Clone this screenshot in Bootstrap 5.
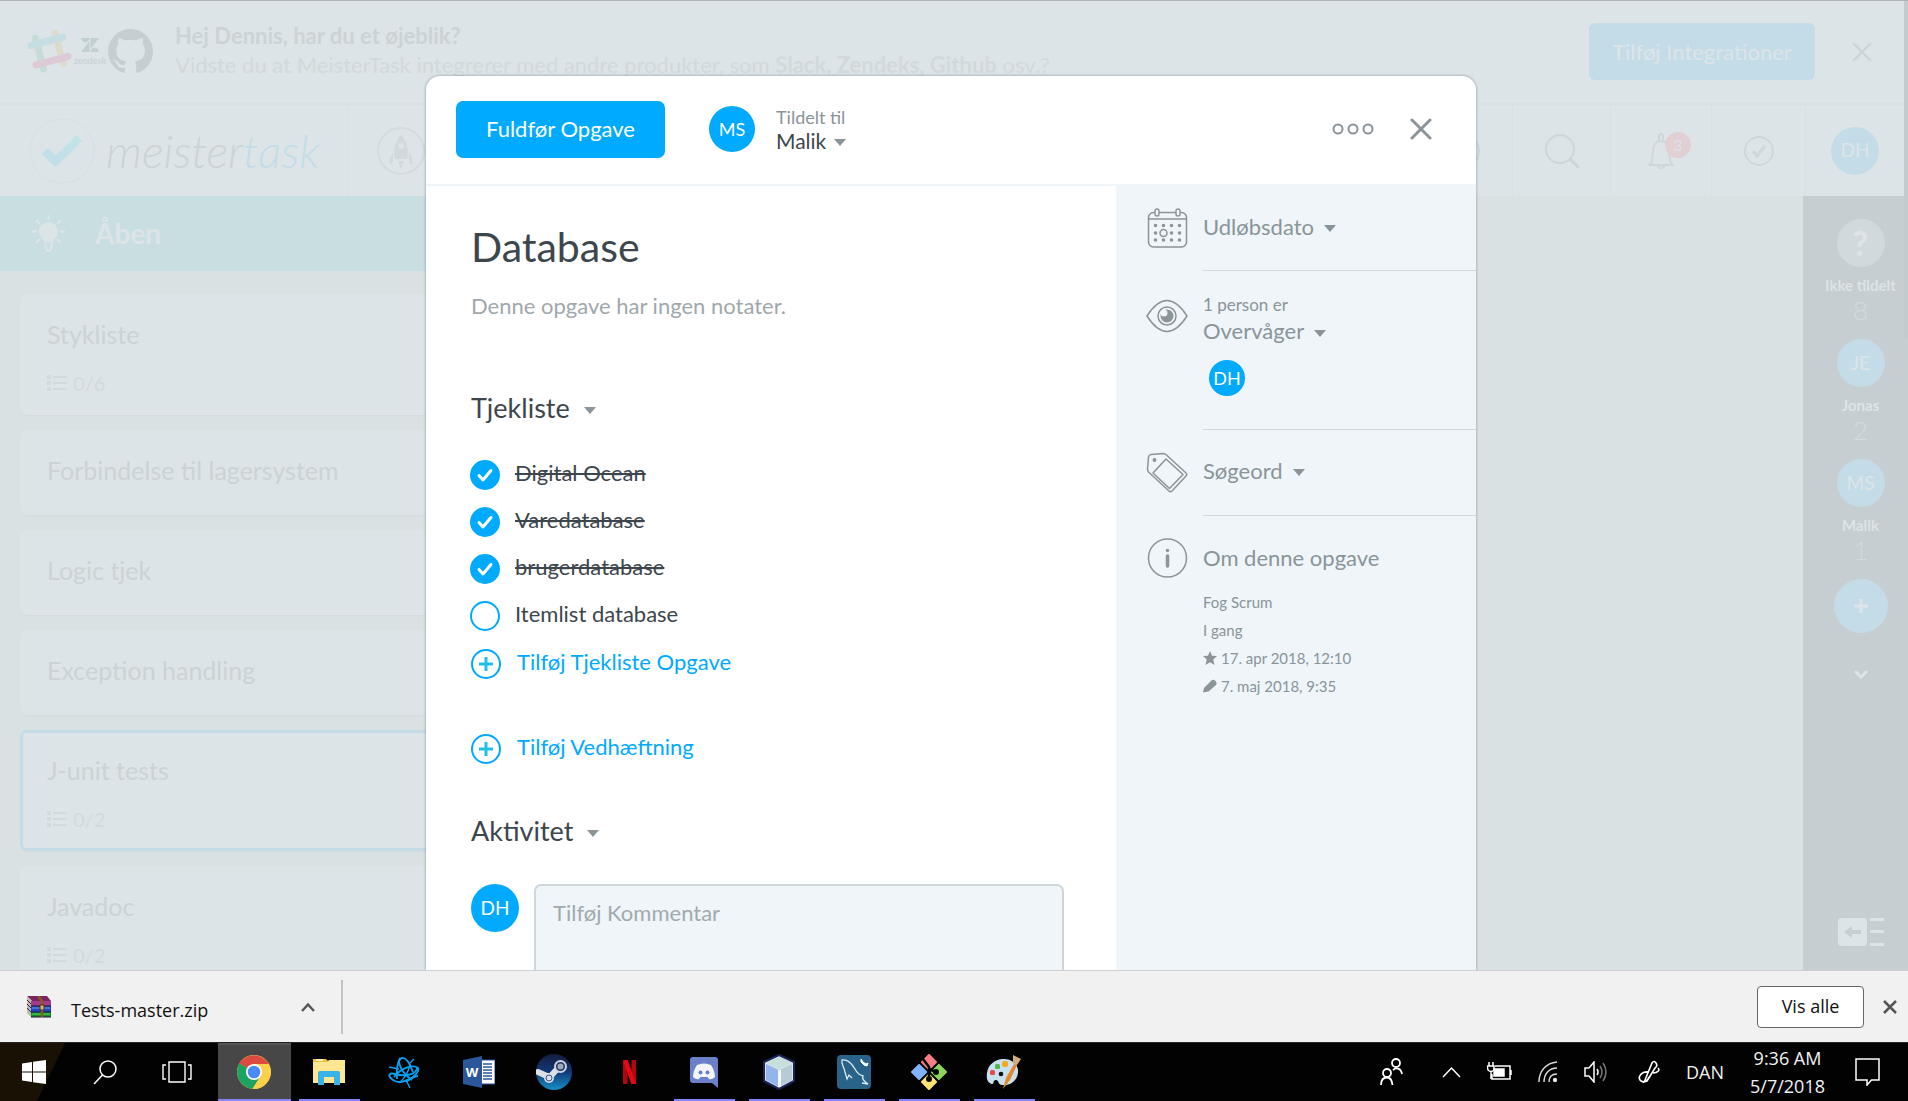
<!DOCTYPE html>
<html lang="da">
<head>
<meta charset="utf-8">
<meta name="viewport" content="width=device-width, initial-scale=1">
<title>MeisterTask – Database</title>
<link href="https://cdn.jsdelivr.net/npm/bootstrap@5.3.0/dist/css/bootstrap.min.css" rel="stylesheet">
<style>
:root{--azure:#00aaff;--ink:#3d464d;--mute:#8a9499;--pale:#eff5f8;--fog:#dde4e7;--fog-line:#d9e0e3;--fog-text:#cbd3d6;--fog-blue:#c4dce8;--fog-side:#c6ced1}
body{font-family:Lato,"Open Sans",sans-serif;font-size:22px;line-height:28px;color:var(--ink);background:#d9e1e3}
svg{display:block;flex:none}
button{font:inherit;color:inherit;background:none;border:0;padding:0}
.dot{display:flex;align-items:center;justify-content:center;flex:none;border-radius:50%;background:var(--azure);color:#fff;width:48px;height:48px;font-size:19px;padding-bottom:1px}
.dot-46{width:46px;height:46px;font-size:18px}
.dot-36{width:36px;height:36px;font-size:18px}
.tri{display:inline-block;margin-top:4px;border:6px solid transparent;border-top:7px solid var(--mute);border-bottom:0;flex:none}

/* washed-out board behind the dialog */
.stage{min-height:0;border-top:1px solid #aeb2b8}
.board{color:var(--fog-text)}
.board .dot{background:var(--fog-blue);color:var(--fog)}
.promo{height:104px;padding:0 36px 0 27px;border-bottom:2px solid #d9e0e3;background:var(--fog)}
.promo-logos{margin-top:28px}
.promo-copy{padding:20px 0 0 22px;line-height:29px}
.promo-line{color:#d1d9dc}
.promo-btn{width:226px;height:57px;margin-top:22px;border-radius:6px;background:var(--fog-blue);color:var(--fog)}
.promo-close{margin:41px 0 0 37px}
.zen{width:36px;font-size:9px;line-height:10px;font-weight:700}
.masthead{height:91px;background:var(--fog)}
.brand{width:349px;padding-left:29px;border-right:1px solid var(--fog-line)}
.wordmark{padding-left:11px;font-size:46px;line-height:60px;font-weight:300;font-style:italic}
.wordmark span{color:var(--fog-blue)}
.cell{width:98px;border-right:1px solid var(--fog-line);display:flex;align-items:center;justify-content:center}
.cell.wide{width:101px}
.cell.slim{width:94px}
.bell-count{position:absolute;left:18px;top:0;width:26px;height:26px;border-radius:50%;background:#e0cfd3;color:var(--fog);font-size:16px;line-height:26px;text-align:center}
.column-top{height:75px;background:#c8dee1;padding-left:32px;color:var(--fog);font-size:28px;font-weight:700;gap:30px}
.lane{width:480px}
.lane-body{padding:23px 0 0 20px;gap:15px}
.task{background:var(--fog);border:3px solid var(--fog);border-radius:7px;padding:20px 24px 24px;box-shadow:0 1px 1px #d4dbde;font-size:25px;line-height:35px}
.task.picked{border-color:var(--fog-blue)}
.task-meta{font-size:20px;line-height:24px;color:#d2dadd;margin:19px 0 -7px;gap:6px}
.people{width:105px;background:var(--fog-side);padding:23px 0 24px 10px;color:var(--fog)}
.people-name{font-size:15px;line-height:20px;font-weight:700;margin-top:8px;white-space:nowrap}
.people-count{font-size:26px;line-height:30px;font-weight:300;margin-bottom:14px;color:#d3dbde}
.board .dot.unset{background:#d1d9dc;font-size:34px;font-weight:900}
.board .dot.plus{width:54px;height:54px;margin-bottom:31px}
.thumb{position:absolute;right:0;top:0;width:4px;height:338px;background:#c3cbce;border-radius:0 0 0 4px}

/* task dialog */
.veil{position:absolute;inset:75px 6px 0 0}
.dialog{width:1050px;background:#fff;border-radius:14px 14px 0 0;box-shadow:0 0 3px rgba(70,85,95,.6);overflow:hidden}
.dialog-top{height:110px;border-bottom:2px solid var(--pale);padding:0 44px 2px 30px}
.done-btn{width:209px;height:57px;border-radius:7px;background:var(--azure);color:#fff;margin-right:44px}
.assign{margin-left:21px;line-height:23px;text-align:left}
.assign small{display:block;font-size:18px;color:var(--mute)}
.assign span{font-size:21px}
.close-btn{margin-left:36px}
.notes{padding:37px 52px 0 45px}
.notes h1{font-size:41px;line-height:48px;font-weight:400;margin:0 0 21px}
.hint{color:#9fa8ac;margin:0 0 71px}
.section-h{font-size:27px;line-height:34px;font-weight:400;margin:0;gap:14px}
.checks{margin:26px 0 1px -1px}
.check-row{height:47px;min-height:0;margin:0;padding:0;gap:15px}
.check-row label{padding-bottom:3px}
.check-row .form-check-input{width:30px;height:30px;margin:0;border:2px solid var(--azure);border-radius:50%;float:none;flex:none}
.check-row .form-check-input:checked{background-color:var(--azure);background-size:30px 30px;background-position:center;background-image:url("data:image/svg+xml,%3csvg xmlns='http://www.w3.org/2000/svg' viewBox='0 0 30 30'%3e%3cpath d='M9 15.500l4 4.500 8-9.500' fill='none' stroke='%23fff' stroke-width='3' stroke-linecap='round' stroke-linejoin='round'/%3e%3c/svg%3e")}
.check-row .form-check-input:checked+label{text-decoration:line-through;text-decoration-thickness:2px}
.add{height:47px;color:var(--azure);text-decoration:none;gap:16px}
.add span{padding-bottom:3px}
.attach{margin:38px 0 42px}
.talk{margin-top:36px;gap:15px}
.comment{border:2px solid #cfd6da;border-radius:7px;background:var(--pale);height:150px;padding:13px 17px;resize:none;font-size:22px;line-height:28px}
.comment::placeholder{color:#a1aaae}
.facts{width:360px;background:var(--pale);color:var(--mute)}
.fact-icon{width:87px;padding:22px 0 0 30px;flex:none}
.fact{min-height:86px}
.fact:first-child{min-height:85px}
.fact>div:last-child{border-bottom:1px solid #d2d9dc}
.fact button{height:84px;gap:10px;padding-bottom:3px}
.fact .tall{height:26px;padding:0}
.watch{padding:21px 0 33px}
.watch-note{font-size:17px;line-height:26px}
.watch .dot{margin:16px 0 0 6px}
.about-h{padding:28px 0 16px}
.about{font-size:15px;line-height:28px;gap:4px}

/* browser download shelf */
.shelf{height:72px;background:#f1f1f1;border-top:1px solid #cdcfd1;color:#111;font-family:"Open Sans","Noto Sans",sans-serif;font-size:18px;padding:0 11px 0 27px}
.saved{width:316px;height:54px;border-right:2px solid #c3c3c3;padding-right:26px;gap:20px}
.saved span{padding-top:6px}
.all-btn{width:107px;height:42px;background:#fff;border:1px solid #666;border-radius:4px;padding-bottom:2px;margin-right:19px}

/* operating system bar */
.taskbar{height:59px;background:#020202;border-top:1px solid #242424;color:#f2f2f2;font-family:"Open Sans","Noto Sans",sans-serif;font-size:18px;line-height:28px}
.sys{width:72px;display:flex;align-items:center;justify-content:center}
.sys:first-child{width:67px;margin-right:2px}
.app{width:73px;margin-right:2px;display:flex;align-items:center;justify-content:center;border-top:2px solid transparent;border-bottom:2px solid transparent}
.app.front{background:#474747;border-top-color:#565656}
.app.open{width:61px;margin:0 8px 0 6px}
.app.front,.app.open{border-bottom-color:#8583f5}
.app svg{margin-right:1px}
.corner{background:linear-gradient(116deg,#191103 0 58px,transparent 59px);margin-right:5px}
.tray{gap:26px;padding-right:28px}
.tray svg:nth-of-type(2){margin-left:13px}
</style>
</head>
<body class="d-flex flex-column vh-100 overflow-hidden">
<div class="stage flex-grow-1 position-relative overflow-hidden">
  <div class="board d-flex flex-column h-100">
    <aside class="promo d-flex align-items-start flex-shrink-0">
      <div class="promo-logos d-flex align-items-center">
        <svg width="45" height="45" viewBox="0 0 45 45" fill="none" stroke-width="7" stroke-linecap="round"><path d="M8.500 9l8 31" stroke="#c6dcd8"/><path d="M28 4l8.500 31" stroke="#dddbcd"/><path d="M4 16.500L36 8" stroke="#c6dde3"/><path d="M9 36l32-8.500" stroke="#dccbd7"/></svg>
        <div class="zen text-center"><svg class="mx-auto mb-1" width="18" height="14" viewBox="0 0 18 14" fill="#c3d0d3"><path d="M0 0h8.500a4.200 4.200 0 0 1-8.500 0zM18 0L9.500 11V0zM8.500 14H0L8.500 3zM9.500 14a4.200 4.200 0 0 1 8.500 0z"/></svg>zendesk</div>
        <svg width="45" height="45" viewBox="0 0 16 16" fill="#c6ced1"><path d="M8 0C3.580 0 0 3.580 0 8c0 3.540 2.290 6.530 5.470 7.590.4.070.55-.17.55-.38 0-.19-.01-.82-.01-1.490-2.010.37-2.530-.49-2.690-.94-.09-.23-.48-.94-.82-1.130-.28-.15-.68-.52-.01-.53.63-.01 1.080.58 1.230.82.72 1.210 1.870.87 2.330.66.07-.52.28-.87.51-1.070-1.780-.2-3.640-.89-3.640-3.950 0-.87.31-1.590.82-2.150-.08-.2-.36-1.020.08-2.120 0 0 .67-.21 2.200.82.640-.18 1.320-.27 2-.27.680 0 1.360.09 2 .27 1.530-1.040 2.200-.82 2.200-.82.44 1.100.16 1.920.08 2.120.51.560.82 1.270.82 2.150 0 3.070-1.870 3.750-3.650 3.950.29.250.54.730.54 1.480 0 1.070-.01 1.930-.01 2.200 0 .21.150.46.550.38A8.013 8.013 0 0 0 16 8c0-4.420-3.580-8-8-8z"/></svg>
      </div>
      <div class="promo-copy flex-grow-1"><strong>Hej Dennis, har du et øjeblik?</strong><div class="promo-line">Vidste du at MeisterTask integrerer med andre produkter, som <b>Slack, Zendeks, Github</b> osv.?</div></div>
      <button class="promo-btn">Tilføj Integrationer</button>
      <button class="promo-close" aria-label="Luk"><svg width="20" height="20" viewBox="0 0 20 20" stroke="#cbd3d6" stroke-width="2"><path d="M1 1l18 18M19 1L1 19"/></svg></button>
    </aside>
    <header class="masthead d-flex flex-shrink-0">
      <a href="#" class="brand d-flex align-items-center text-decoration-none text-reset">
        <svg width="66" height="66" viewBox="0 0 66 66"><defs><linearGradient id="tick" x1="0" y1="1" x2="1" y2="0"><stop stop-color="#c1dceb"/><stop offset="1" stop-color="#c1e5e5"/></linearGradient></defs><circle cx="33" cy="33" r="32" fill="none" stroke="#d8dfe2"/><path d="M12.500 36l6.500-6.500 7.500 8L47.500 17l6 6-27 26z" fill="url(#tick)"/></svg>
        <span class="wordmark">meister<span>task</span></span>
      </a>
      <div class="d-flex align-items-center ms-4 ps-1"><svg width="48" height="48" viewBox="0 0 48 48"><circle cx="24" cy="24" r="23" fill="none" stroke="#d3dbde" stroke-width="2"/><g fill="#d1d9dc"><path fill-rule="evenodd" d="M24 8c6 6 8 14 6 24H18c-2-10 0-18 6-24zm0 8a3 3 0 1 0 0 6 3 3 0 0 0 0-6z"/><path d="M16 26v9l-3 3c-1-5 0-9 3-12zM32 26v9l3 3c1-5 0-9-3-12zM21 34h6l-3 8z"/></g></svg></div>
      <nav class="d-flex ms-auto me-1">
        <a href="#" class="cell" aria-label="Tid"><svg width="34" height="34" viewBox="0 0 34 34" fill="none" stroke="#cfd7da" stroke-width="2"><circle cx="17" cy="17" r="15"/></svg></a>
        <a href="#" class="cell" aria-label="Søg"><svg width="36" height="36" viewBox="0 0 36 36" fill="none" stroke="#cdd5d8" stroke-width="2"><circle cx="16" cy="16" r="14"/><path d="M26 26l8 8" stroke-width="3" stroke-linecap="round"/></svg></a>
        <a href="#" class="cell wide text-decoration-none" aria-label="Beskeder"><span class="position-relative"><svg width="28" height="37" viewBox="0 0 28 37" fill="none" stroke="#cfd7da" stroke-width="2"><path d="M12 9V4a2 2 0 0 1 4 0v5M2 33c4-3 3-6 4-14 0-6 3-10 8-10s8 4 8 10c1 8 0 11 4 14z" stroke-linejoin="round"/><path d="M11 33a3 3 0 0 0 6 0"/></svg><span class="bell-count">3</span></span></a>
        <a href="#" class="cell slim" aria-label="Mine opgaver"><svg width="30" height="30" viewBox="0 0 30 30" fill="none" stroke="#cfd7da" stroke-width="2"><circle cx="15" cy="15" r="14"/><path d="M9 15l4 5 8-10" stroke-width="3"/></svg></a>
        <a href="#" class="cell text-decoration-none border-0"><span class="dot">DH</span></a>
      </nav>
    </header>
    <div class="d-flex flex-grow-1 overflow-hidden">
      <section class="lane overflow-hidden">
        <h2 class="column-top d-flex align-items-center m-0"><svg width="33" height="38" viewBox="0 0 33 38"><path d="M16.500 7a9.500 9.500 0 0 1 9.500 9.500c0 5-4 6-5 11h-9c-1-5-5-6-5-11A9.500 9.500 0 0 1 16.500 7z" fill="#dde4e7"/><path d="M16.500 0v5M0 16.500h5M28 16.500h5M4 5l4 4M29 5l-4 4M4 28l4-4M29 28l-4-4M13.500 28v4a3 3 0 0 0 6 0v-4" stroke="#dde4e7" stroke-width="2" fill="none"/><path d="M14 34h5v3h-5z" fill="#dde4e7"/></svg>Åben</h2>
        <div class="lane-body d-flex flex-column">
          <article class="task">Stykliste<div class="task-meta d-flex align-items-center"><svg width="20" height="16" viewBox="0 0 20 16" stroke="#d2dadd" stroke-width="2"><path d="M0 2h4M0 8h4M0 14h4" stroke-width="4"/><path d="M6 2h14M6 8h14M6 14h14"/></svg>0/6</div></article>
          <article class="task">Forbindelse til lagersystem</article>
          <article class="task">Logic tjek</article>
          <article class="task">Exception handling</article>
          <article class="task picked">J-unit tests<div class="task-meta d-flex align-items-center"><svg width="20" height="16" viewBox="0 0 20 16" stroke="#d2dadd" stroke-width="2"><path d="M0 2h4M0 8h4M0 14h4" stroke-width="4"/><path d="M6 2h14M6 8h14M6 14h14"/></svg>0/2</div></article>
          <article class="task">Javadoc<div class="task-meta d-flex align-items-center"><svg width="20" height="16" viewBox="0 0 20 16" stroke="#d2dadd" stroke-width="2"><path d="M0 2h4M0 8h4M0 14h4" stroke-width="4"/><path d="M6 2h14M6 8h14M6 14h14"/></svg>0/2</div></article>
        </div>
      </section>
      <aside class="people d-flex flex-column align-items-center ms-auto">
        <span class="dot unset">?</span><span class="people-name">Ikke tildelt</span><span class="people-count">8</span>
        <span class="dot">JE</span><span class="people-name">Jonas</span><span class="people-count">2</span>
        <span class="dot">MS</span><span class="people-name">Malik</span><span class="people-count">1</span>
        <button class="dot plus" aria-label="Tilføj medlem"><svg width="16" height="16" viewBox="0 0 16 16" stroke="#dde4e7" stroke-width="3"><path d="M8 1v14M1 8h14"/></svg></button>
        <svg width="30" height="20" viewBox="0 0 30 20" fill="none" stroke="#dde4e7" stroke-width="3" stroke-linecap="round"><path d="M10 8l5 5 5-5"/></svg>
        <button class="mt-auto" aria-label="Skjul panel"><svg width="46" height="28" viewBox="0 0 46 28" fill="#dde4e7"><rect width="29" height="28" rx="3"/><path d="M32 0h14v3H32zM32 12h14v3H32zM32 25h14v3H32z"/><path d="M6 14l8-6v4h9v4h-9v4z" fill="#c6ced1"/></svg></button>
      </aside>
    </div>
  </div>
  <div class="thumb"></div>

  <div class="veil d-flex justify-content-center">
    <main class="dialog d-flex flex-column" role="dialog" aria-label="Database">
      <div class="dialog-top d-flex align-items-center flex-shrink-0">
        <button class="done-btn">Fuldfør Opgave</button>
        <span class="dot dot-46">MS</span>
        <button class="assign"><small>Tildelt til</small><span class="d-flex align-items-center gap-2">Malik<i class="tri"></i></span></button>
        <button class="ms-auto" aria-label="Mere"><svg width="42" height="12" viewBox="0 0 42 12" fill="none" stroke="#8a9499" stroke-width="2"><circle cx="6" cy="6" r="4.500"/><circle cx="21" cy="6" r="4.500"/><circle cx="36" cy="6" r="4.500"/></svg></button>
        <button class="close-btn" aria-label="Luk opgave"><svg width="22" height="22" viewBox="0 0 22 22" stroke="#8a9499" stroke-width="3" stroke-linecap="round"><path d="M2 2l18 18M20 2L2 20"/></svg></button>
      </div>
      <div class="d-flex flex-grow-1">
        <section class="notes flex-grow-1">
          <h1>Database</h1>
          <p class="hint">Denne opgave har ingen notater.</p>
          <h2 class="section-h d-flex align-items-center">Tjekliste <i class="tri"></i></h2>
          <div class="checks">
            <div class="form-check check-row d-flex align-items-center"><input class="form-check-input" type="checkbox" id="c1" checked><label for="c1">Digital Ocean</label></div>
            <div class="form-check check-row d-flex align-items-center"><input class="form-check-input" type="checkbox" id="c2" checked><label for="c2">Varedatabase</label></div>
            <div class="form-check check-row d-flex align-items-center"><input class="form-check-input" type="checkbox" id="c3" checked><label for="c3">brugerdatabase</label></div>
            <div class="form-check check-row d-flex align-items-center"><input class="form-check-input" type="checkbox" id="c4"><label for="c4">Itemlist database</label></div>
          </div>
          <a href="#" class="add d-flex align-items-center"><svg width="30" height="30" viewBox="0 0 30 30" fill="none" stroke="#00aaff" stroke-width="2"><circle cx="15" cy="15" r="14"/><path d="M15 8v14M8 15h14" stroke="#1fbfe6" stroke-width="3"/></svg><span>Tilføj Tjekliste Opgave</span></a>
          <a href="#" class="add attach d-flex align-items-center"><svg width="30" height="30" viewBox="0 0 30 30" fill="none" stroke="#00aaff" stroke-width="2"><circle cx="15" cy="15" r="14"/><path d="M15 8v14M8 15h14" stroke="#1fbfe6" stroke-width="3"/></svg><span>Tilføj Vedhæftning</span></a>
          <h2 class="section-h d-flex align-items-center">Aktivitet <i class="tri"></i></h2>
          <div class="talk d-flex"><span class="dot">DH</span><textarea class="comment form-control" placeholder="Tilføj Kommentar" aria-label="Tilføj Kommentar"></textarea></div>
        </section>
        <aside class="facts flex-shrink-0">
          <div class="fact d-flex">
            <div class="fact-icon"><svg width="42" height="40" viewBox="0 0 42 40" fill="none" stroke="#8a9499"><rect x="2.500" y="4.500" width="38" height="34.500" rx="5" stroke-width="1.500"/><path d="M2.500 11h38" stroke-width="1.500"/><g fill="#eff5f8" stroke-width="1.400"><rect x="9" y="1" width="4" height="7" rx="2"/><rect x="30" y="1" width="4" height="7" rx="2"/></g><path d="M9.500 17.500h0M17.500 17.500h0M25.500 17.500h0M33.500 17.500h0M9.500 25h0M25.500 25h0M33.500 25h0M9.500 32h0M17.500 32h0M25.500 32h0M33.500 32h0" stroke-width="3.600" stroke-linecap="round"/><circle cx="17.500" cy="25" r="3.500" stroke-width="1.500"/></svg></div>
            <div class="flex-grow-1"><button class="d-flex align-items-center">Udløbsdato <i class="tri"></i></button></div>
          </div>
          <div class="fact d-flex">
            <div class="fact-icon pt-4 mt-1"><svg width="42" height="34" viewBox="0 0 42 34" fill="none" stroke="#8a9499" stroke-width="1.500"><path d="M1 17C8 6 14 1.500 21 1.500S34 6 41 17C34 28 28 32.500 21 32.500S8 28 1 17z"/><circle cx="21" cy="17" r="9"/><circle cx="21" cy="17" r="6.500" fill="#8a9499" stroke="none"/><circle cx="18" cy="14" r="3.500" fill="#eff5f8" stroke="none"/></svg></div>
            <div class="watch flex-grow-1"><div class="watch-note">1 person er</div><button class="tall d-flex align-items-center">Overvåger <i class="tri"></i></button><span class="dot dot-36">DH</span></div>
          </div>
          <div class="fact d-flex">
            <div class="fact-icon"><svg width="42" height="41" viewBox="0 0 42 41" fill="none" stroke="#8a9499" stroke-width="1.500" stroke-linejoin="round"><path d="M5 2.500L17 1.500q2 0 3.500 1.500L40 21q1.500 1.500 0 3L26 39q-1.500 1.500-3 0L2.500 20Q1.500 18.500 1.500 17L2.500 5Q3 2.700 5 2.500z"/><path d="M20 7L37 22.500 23.500 36.500 7 21z"/><circle cx="8.500" cy="8" r="1.200" fill="#8a9499"/></svg></div>
            <div class="flex-grow-1"><button class="d-flex align-items-center">Søgeord <i class="tri"></i></button></div>
          </div>
          <div class="d-flex">
            <div class="fact-icon"><svg width="42" height="40" viewBox="0 0 42 40" fill="none" stroke="#8a9499"><circle cx="21.500" cy="20" r="19" stroke-width="1.500"/><path d="M21.500 18v10" stroke-width="3.500" stroke-linecap="round"/><circle cx="21.500" cy="12.500" r="1.700" fill="#8a9499" stroke="none"/></svg></div>
            <div class="flex-grow-1"><div class="about-h">Om denne opgave</div>
              <div class="about">Fog Scrum</div>
              <div class="about">I gang</div>
              <div class="about d-flex align-items-center"><svg width="14" height="14" viewBox="0 0 14 14" fill="#8a9499"><path d="M7 0l2 4.700 5 .4-3.800 3.300L11.500 14 7 11.200 2.500 14l1.300-5.600L0 5.100l5-.4z"/></svg>17. apr 2018, 12:10</div>
              <div class="about d-flex align-items-center"><svg width="14" height="14" viewBox="0 0 14 14" fill="#8a9499"><path d="M0 13.500l1-4.500 7.500-7.500q2-1.500 4 .5t.5 4L5.500 12.500z"/></svg>7. maj 2018, 9:35</div>
            </div>
          </div>
        </aside>
      </div>
    </main>
  </div>
</div>

<footer class="shelf d-flex align-items-center flex-shrink-0">
  <div class="saved d-flex align-items-center">
    <svg width="24" height="22" viewBox="0 0 24 22"><path d="M0 0h20l4 5H5z" fill="#7a2466"/><path d="M0 0l5 5v17l-5-5z" fill="#bfb9b0"/><path d="M0 4l5 5M0 8l5 5M0 12l5 5" stroke="#333"/><path d="M4 5h20v5H4z" fill="#a13b8c"/><path d="M4 10h20v6H4z" fill="#2446c4"/><path d="M4 16h20v5H4z" fill="#188a2c"/><path d="M4 10h20M4 16h20M4 21h20" stroke="#1d1440"/><path d="M5 12h18" stroke="#6ea0ff"/><path d="M5 18h18" stroke="#4fe05a"/><path d="M11 0l4 5v16" fill="none" stroke="#8a5a1c" stroke-width="2.500"/><path d="M13 9h4v5h-4z" fill="#d9b96a" stroke="#4a3010"/></svg>
    <span>Tests-master.zip</span>
    <button class="ms-auto" aria-label="Flere valg"><svg width="14" height="10" viewBox="0 0 14 10" fill="none" stroke="#555" stroke-width="2.500"><path d="M1 9l6-6.500L13 9"/></svg></button>
  </div>
  <button class="all-btn ms-auto">Vis alle</button>
  <button aria-label="Luk linjen"><svg width="14" height="14" viewBox="0 0 14 14" stroke="#555" stroke-width="2.500"><path d="M1 1l12 12M13 1L1 13"/></svg></button>
</footer>

<nav class="taskbar d-flex flex-shrink-0">
  <div class="d-flex corner">
    <button class="sys" aria-label="Start"><svg width="24" height="24" viewBox="0 0 24 24" fill="#fff"><path d="M0 3.500L10 2v9.500H0zM11 1.800L24 0v11.500H11zM0 12.500h10V22L0 20.500zM11 12.500h13V24l-13-1.800z"/></svg></button>
    <button class="sys" aria-label="Søg"><svg width="24" height="25" viewBox="0 0 24 25" fill="none" stroke="#fff" stroke-width="1.500"><circle cx="15" cy="9" r="8"/><path d="M9.500 15L1 24"/></svg></button>
    <button class="sys" aria-label="Opgavevisning"><svg width="30" height="22" viewBox="0 0 30 22" fill="none" stroke="#fff" stroke-width="1.400"><path d="M7 1h16v20H7zM4 4H1v14h3M26 4h3v14h-3"/></svg></button>
  </div>
  <button class="app front" aria-label="Chrome"><svg width="34" height="34" viewBox="0 0 34 34"><circle cx="17" cy="17" r="17" fill="#fdd04a"/><path d="M17 17L2.300 8.500A17 17 0 0 1 31.700 9H17z" fill="#dc4b3e"/><path d="M2.300 8.500A17 17 0 0 0 15.500 33.900L23.500 21z" fill="#1da261"/><path d="M2.300 8.500L9.600 21 17 17z" fill="#1da261"/><path d="M17 9h14.700A17 17 0 0 1 15.500 33.900L23.900 21z" fill="#fdd04a"/><circle cx="17" cy="17" r="8" fill="#fff"/><circle cx="17" cy="17" r="6.300" fill="#4a8af4"/></svg></button>
  <button class="app open" aria-label="Stifinder"><svg width="32" height="28" viewBox="0 0 32 28"><path d="M0 1h13l3 3H0z" fill="#f7c22f"/><path d="M3 2h7" stroke="#fff" stroke-width="1.500"/><path d="M0 4h14l2-2h16v23H0z" fill="#ffe693"/><path d="M5 27V15q0-2 2-2h18q2 0 2 2v12h-6v-8H11v8z" fill="#39b2e8"/></svg></button>
  <button class="app" aria-label="Battle.net"><svg width="32" height="32" viewBox="0 0 32 32" fill="none" stroke="#0a9ff0" stroke-width="1.900"><path d="M9 23C8 13 10 3 14 2s8 6 11 14"/><path d="M12 2c-3 5 2 15 12 22"/><path d="M6 21c7-9 19-13 24-9 2 4-4 9-12 14"/><path d="M29 12c0 6-11 9-22 6s-4 9 6 8c7-1 13-6 17-6"/><path d="M11 27C17 22 21 14 22 8" stroke-width="1.500"/><path d="M1 11l10 2M19 26l3 6M21 8l5-5" stroke-width="1.400"/></svg></button>
  <button class="app" aria-label="Word"><svg width="32" height="32" viewBox="0 0 32 32"><path d="M17 4h15v24H17z" fill="#fff" stroke="#2b579a"/><path d="M20 8h9M20 11h9M20 14h9M20 17h9M20 20h9M20 23h9" stroke="#2b579a" stroke-width="1.300"/><path d="M0 4l19-4v32L0 28z" fill="#2b579a"/><text x="9" y="21" text-anchor="middle" font-family="Open Sans" font-weight="700" font-size="13" fill="#fff">W</text></svg></button>
  <button class="app" aria-label="Steam"><svg width="36" height="36" viewBox="0 0 36 36"><defs><linearGradient id="st" x2="0" y2="1"><stop stop-color="#141c3e"/><stop offset=".5" stop-color="#12397a"/><stop offset="1" stop-color="#1591c4"/></linearGradient></defs><circle cx="18" cy="18" r="18" fill="url(#st)"/><path d="M2 18l11 5M13 24l10-11" stroke="#dcdfe4" stroke-width="6" stroke-linecap="round"/><circle cx="13" cy="24" r="5" fill="#dcdfe4"/><circle cx="13" cy="24" r="3" fill="none" stroke="#33538b"/><circle cx="24.500" cy="12.500" r="6.500" fill="#cfd4dc"/><circle cx="24.500" cy="12.500" r="3.800" fill="#9fa9b8" stroke="#1b3468" stroke-width="1.500"/></svg></button>
  <button class="app" aria-label="Netflix"><svg width="13" height="24" viewBox="0 0 13 24"><path d="M0 0h4.500v24H0zM8.500 0H13v24H8.500z" fill="#b1060f"/><path d="M2.300 0l8.400 24" stroke="#e50914" stroke-width="4.500"/></svg></button>
  <button class="app open" aria-label="Discord"><svg width="30" height="31" viewBox="0 0 30 31"><path d="M4 0h22q3 0 3 3v28l-6-5H4q-3 0-3-3V3q0-3 3-3z" fill="#6b80c8"/><path d="M8 8q7-3 14 0 4 6 4 12-3 3-6 2l-1.500-2h-7L10 22q-3 1-6-2 0-6 4-12z" fill="#f4f5fb"/><circle cx="11.500" cy="15.500" r="2" fill="#6b80c8"/><circle cx="18.500" cy="15.500" r="2" fill="#6b80c8"/></svg></button>
  <button class="app open" aria-label="NetBeans"><svg width="34" height="36" viewBox="0 0 34 36" stroke="#1d2258" stroke-width="2" stroke-linejoin="round"><path d="M17 1L32 8v19L17 35 2 27V8z" fill="#d9e6ee"/><g stroke="none"><path d="M17 3l13 6-13 6L4 9z" fill="#c5dfda"/><path d="M4 10l13 6v17L4 26z" fill="#94b4ee"/><path d="M30 10l-13 6v17l13-7z" fill="#b6cbd6"/><path d="M16 16h3v17h-3z" fill="#f3f8fb"/></g></svg></button>
  <button class="app open" aria-label="MySQL Workbench"><svg width="34" height="34" viewBox="0 0 34 34"><rect width="34" height="34" rx="4" fill="#2a6389"/><path d="M8 17C7 12 4 9 5 5c6-1 10 4 13 9 2 4 4 6 8 7-1 2-1 4 5 8l-6-1M8 17l2 7 2-4 3 3" fill="none" stroke="#dcebf2" stroke-width="1.300"/><path d="M24 4l2 3 3 2 2-1-1 3-3-1-3-3z" fill="#fff" stroke="#fff"/></svg></button>
  <button class="app open" aria-label="Git"><svg width="36" height="36" viewBox="0 0 36 36"><g transform="rotate(45 18 18)"><rect x="5" y="5" width="12" height="12" rx="1" fill="#f87d80"/><rect x="19" y="5" width="12" height="12" rx="1" fill="#8ad65c"/><rect x="5" y="19" width="12" height="12" rx="1" fill="#80b3ff"/><rect x="19" y="19" width="12" height="12" rx="1" fill="#ffe375"/></g><path d="M12 5l6 8v11M18 15l7 3" stroke="#050505" stroke-width="2.500" fill="none"/><circle cx="18" cy="25" r="3" fill="#050505"/><circle cx="25" cy="18" r="3" fill="#050505"/></svg></button>
  <button class="app open" aria-label="Paint"><svg width="36" height="36" viewBox="0 0 36 36"><path d="M16 5c10-1 17 6 16 14S24 32 16 31c-4 0-3-5-6-5-4 0-1 4-4 4-4-1-6-5-5-11C2 11 8 6 16 5z" fill="#c9e0ef"/><circle cx="15" cy="20" r="2.300" fill="#111"/><rect x="4" y="16" width="5" height="5" rx="1.500" fill="#e5484d"/><rect x="9" y="10" width="5" height="5" rx="1.500" fill="#4fb848"/><rect x="16" y="7" width="6" height="6" rx="2" fill="#f6a723"/><path d="M17 35l3-11 8-14 3 1-7 15z" fill="#e28a2b"/><path d="M27 1l8 4-4 6-4-1z" fill="#d5ad7c"/></svg></button>

  <div class="tray d-flex align-items-center ms-auto">
    <svg width="23" height="28" viewBox="0 0 23 28" fill="none" stroke="#fff" stroke-width="1.800"><circle cx="7" cy="15" r="4"/><path d="M1 27c0-5 2-7.500 6-7.500s5 3 5.500 7.500"/><circle cx="16" cy="5" r="4"/><path d="M13 12c3-3 8-2 9 4"/></svg>
    <svg width="19" height="12" viewBox="0 0 19 12" fill="none" stroke="#fff" stroke-width="1.500"><path d="M1 11l8.500-9L18 11"/></svg>
    <svg width="25" height="20" viewBox="0 0 25 20" fill="none" stroke="#fff" stroke-width="1.500"><path d="M8 4h15v13H5v-5M24 8v5M2 0v4M6 0v4M0 4h7v4q-3 3-6 0zM4 9v8"/><path d="M7 7h10v7H7z" fill="#fff"/></svg>
    <svg width="20" height="22" viewBox="0 0 20 22" fill="none" stroke="#ddd" stroke-width="1.400"><path d="M1 21C1 10 8 2 19 1M6 21c0-8 5-14 13-14M11 21c0-5 3-8 8-8"/><circle cx="17" cy="19" r="1.500" fill="#fff"/></svg>
    <svg width="24" height="22" viewBox="0 0 24 22" fill="none" stroke="#fff" stroke-width="1.500"><path d="M1 7h4l5-6v20l-5-6H1zM13 8q2 3 0 6"/><path d="M16 5q4 6 0 12M19 2q6 9 0 18" stroke="#777"/></svg>
    <svg class="ms-1" width="22" height="24" viewBox="0 0 22 24" fill="none" stroke="#fff" stroke-width="1.600"><path d="M7 20L14 3q2-3 4 0t-1 5L9 21l-3 1zM11 12c-8-1-11 5-9 8s8 2 9-3M15 13c5 0 7-3 5-5"/></svg>
    <span>DAN</span>
    <div class="text-center">9:36 AM<br>5/7/2018</div>
    <svg class="ms-1" width="25" height="28" viewBox="0 0 25 28" fill="none" stroke="#fff" stroke-width="1.500"><path d="M1 1h23v21h-7.500l-4.500 5v-5H1z"/></svg>
  </div>
</nav>
<script src="https://cdn.jsdelivr.net/npm/bootstrap@5.3.0/dist/js/bootstrap.bundle.min.js"></script>
</body>
</html>
